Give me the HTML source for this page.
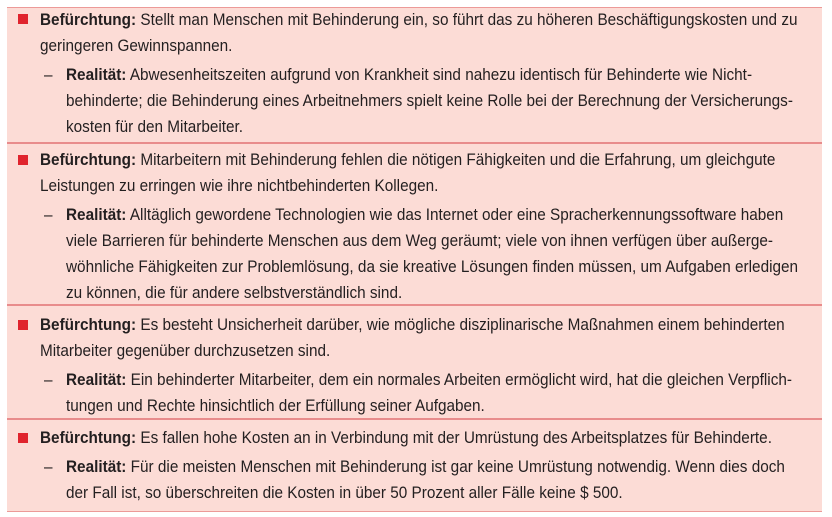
<!DOCTYPE html>
<html><head><meta charset="utf-8"><style>
body{margin:0;width:832px;height:517px;background:#fff;position:relative;overflow:hidden;font-family:"Liberation Sans",sans-serif;font-size:16.5px;color:#231f20}
.p{position:absolute;left:7px;top:7px;width:815px;height:503px;background:#fcdcd6;border-top:1.5px solid #ec9a98;border-bottom:1.5px solid #ec9a98}
.d{position:absolute;left:7px;width:815px;height:1.5px;background:#e88c8c}
.l{position:absolute;white-space:nowrap;line-height:20px;transform:scaleX(0.928);transform-origin:0 0}
.sq{position:absolute;left:18px;width:10px;height:10px;background:#e0242e}
b{font-weight:bold}
</style></head><body>
<div class="p"></div>
<div class="d" style="top:142px"></div>
<div class="d" style="top:304px"></div>
<div class="d" style="top:418px"></div>

<div class="sq" style="top:14px"></div>
<div class="l" style="left:40px;top:10px"><b>Befürchtung:</b> Stellt man Menschen mit Behinderung ein, so führt das zu höheren Beschäftigungskosten und zu</div>
<div class="l" style="left:40px;top:36px">geringeren Gewinnspannen.</div>
<div class="l" style="left:44px;top:65px">–</div>
<div class="l" style="left:66px;top:65px"><b>Realität:</b> Abwesenheitszeiten aufgrund von Krankheit sind nahezu identisch für Behinderte wie Nicht-</div>
<div class="l" style="left:66px;top:91px">behinderte; die Behinderung eines Arbeitnehmers spielt keine Rolle bei der Berechnung der Versicherungs-</div>
<div class="l" style="left:66px;top:117px">kosten für den Mitarbeiter.</div>

<div class="sq" style="top:155px"></div>
<div class="l" style="left:40px;top:150px"><b>Befürchtung:</b> Mitarbeitern mit Behinderung fehlen die nötigen Fähigkeiten und die Erfahrung, um gleichgute</div>
<div class="l" style="left:40px;top:176px">Leistungen zu erringen wie ihre nichtbehinderten Kollegen.</div>
<div class="l" style="left:44px;top:205px">–</div>
<div class="l" style="left:66px;top:205px"><b>Realität:</b> Alltäglich gewordene Technologien wie das Internet oder eine Spracherkennungssoftware haben</div>
<div class="l" style="left:66px;top:231px">viele Barrieren für behinderte Menschen aus dem Weg geräumt; viele von ihnen verfügen über außerge-</div>
<div class="l" style="left:66px;top:257px">wöhnliche Fähigkeiten zur Problemlösung, da sie kreative Lösungen finden müssen, um Aufgaben erledigen</div>
<div class="l" style="left:66px;top:283px">zu können, die für andere selbstverständlich sind.</div>

<div class="sq" style="top:320px"></div>
<div class="l" style="left:40px;top:315px"><b>Befürchtung:</b> Es besteht Unsicherheit darüber, wie mögliche disziplinarische Maßnahmen einem behinderten</div>
<div class="l" style="left:40px;top:341px">Mitarbeiter gegenüber durchzusetzen sind.</div>
<div class="l" style="left:44px;top:370px">–</div>
<div class="l" style="left:66px;top:370px"><b>Realität:</b> Ein behinderter Mitarbeiter, dem ein normales Arbeiten ermöglicht wird, hat die gleichen Verpflich-</div>
<div class="l" style="left:66px;top:396px">tungen und Rechte hinsichtlich der Erfüllung seiner Aufgaben.</div>

<div class="sq" style="top:433px"></div>
<div class="l" style="left:40px;top:428px"><b>Befürchtung:</b> Es fallen hohe Kosten an in Verbindung mit der Umrüstung des Arbeitsplatzes für Behinderte.</div>
<div class="l" style="left:44px;top:457px">–</div>
<div class="l" style="left:66px;top:457px"><b>Realität:</b> Für die meisten Menschen mit Behinderung ist gar keine Umrüstung notwendig. Wenn dies doch</div>
<div class="l" style="left:66px;top:483px">der Fall ist, so überschreiten die Kosten in über 50 Prozent aller Fälle keine $ 500.</div>
</body></html>
